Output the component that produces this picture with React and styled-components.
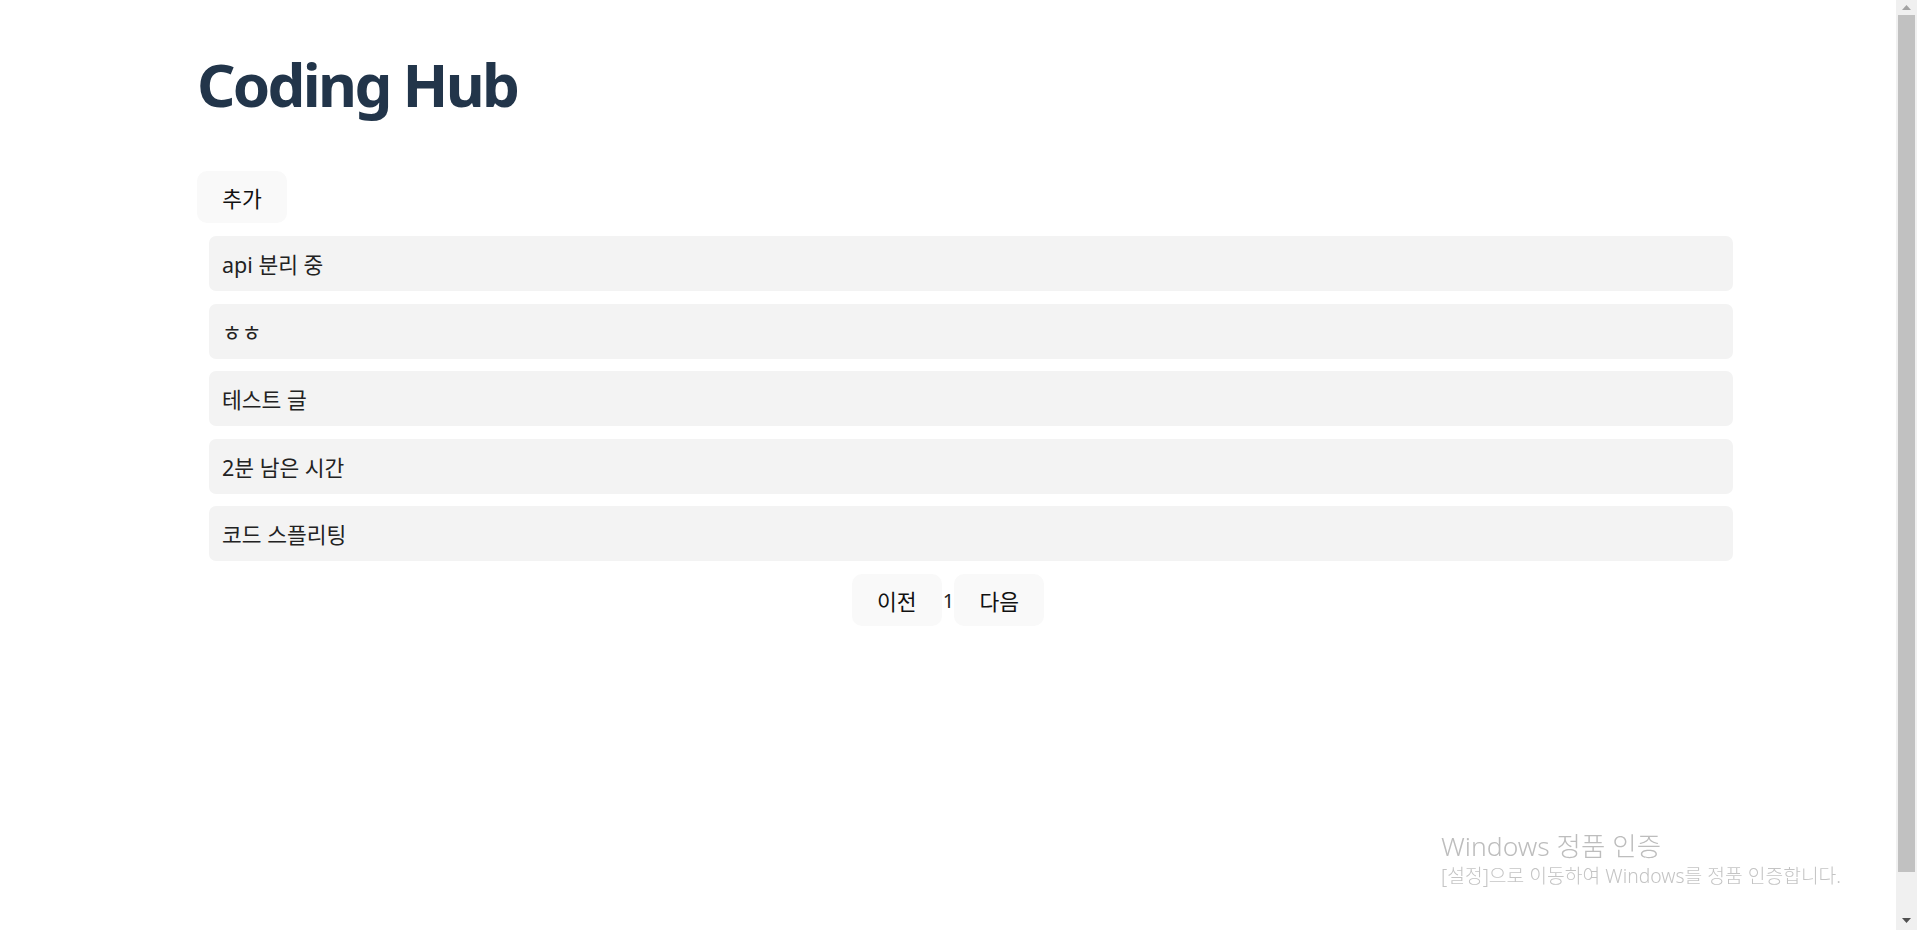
import styled, { createGlobalStyle } from 'styled-components';

const GlobalStyle = createGlobalStyle`
  html, body {
    margin: 0;
    padding: 0;
    background: #fff;
    overflow: hidden;
  }

  body {
    font-family: "Noto Sans", "Noto Sans CJK KR", sans-serif;
    color: #222;
  }
`;

const Shell = styled.div`
  display: flex;
  height: 930px;
`;

const Page = styled.div`
  flex: 1;
  padding-top: 48px;
  box-sizing: border-box;
`;

const Container = styled.main`
  width: 1548px;
  margin-left: 197px;
  display: flex;
  flex-direction: column;
`;

const Title = styled.h1`
  margin: 0 0 51px;
  font-size: 60px;
  line-height: 72px;
  font-weight: 700;
  letter-spacing: -2.7px;
  color: #22354a;
`;

const Button = styled.button`
  width: 90px;
  height: 52px;
  padding: 0;
  border: none;
  border-radius: 10px;
  background: #f9f9f9;
  font-family: inherit;
  font-size: 21.5px;
  color: #111;
  cursor: pointer;
`;

const Toolbar = styled.div`
  display: flex;
  margin-bottom: 13px;
`;

const PostList = styled.ul`
  list-style: none;
  margin: 0 12px;
  padding: 0;
  display: flex;
  flex-direction: column;
  gap: 12.5px;
`;

const PostItem = styled.li`
  height: 55px;
  display: flex;
  align-items: center;
  padding: 0 13px;
  border-radius: 7px;
  background: #f3f3f3;
  font-size: 21.5px;
  color: #222;
`;

const Pagination = styled.nav`
  margin-top: 13px;
  display: flex;
  justify-content: center;
  align-items: center;
`;

const PageNumber = styled.span`
  font-size: 20px;
  color: #222;
  padding: 0 0 0 1px;
`;

const ScrollBar = styled.div`
  width: 21px;
  height: 930px;
  background: #f0f0f0;
  display: flex;
  flex-direction: column;
  align-items: center;
`;

const ScrollArrow = styled.div`
  height: ${(p) => p.$size}px;
  width: 21px;
  display: flex;
  align-items: ${(p) => (p.$bottom ? 'flex-end' : 'center')};
  justify-content: center;
  padding-bottom: ${(p) => (p.$bottom ? '7px' : '0')};
  box-sizing: border-box;
  flex-shrink: 0;
`;

const ScrollThumb = styled.div`
  width: 17px;
  height: 857px;
  background: #c1c1c1;
`;

const Watermark = styled.div`
  position: fixed;
  left: 1441px;
  top: 828px;
  color: #bdbdbd;
  pointer-events: none;
  font-family: "Noto Sans", "Noto Sans CJK KR", sans-serif;
  font-weight: 300;
`;

const WatermarkTitle = styled.div`
  font-size: 26.5px;
  line-height: 36px;
`;

const WatermarkText = styled.div`
  font-size: 19.3px;
  line-height: 24px;
  color: #c4c4c4;
`;

const posts = ['api 분리 중', 'ㅎㅎ', '테스트 글', '2분 남은 시간', '코드 스플리팅'];

const App = () => {
  return (
    <>
      <GlobalStyle />
      <Shell>
        <Page>
          <Container>
            <Title>Coding Hub</Title>
            <Toolbar>
              <Button>추가</Button>
            </Toolbar>
            <PostList>
              {posts.map((title) => (
                <PostItem key={title}>{title}</PostItem>
              ))}
            </PostList>
          </Container>
          <Pagination>
            <Button>이전</Button>
            <PageNumber>1</PageNumber>
            <Button>다음</Button>
          </Pagination>
        </Page>
        <ScrollBar>
          <ScrollArrow $size={15}>
            <svg width="9" height="5" viewBox="0 0 9 5">
              <path d="M0 5 L4.5 0 L9 5 Z" fill="#a3a3a3" />
            </svg>
          </ScrollArrow>
          <ScrollThumb />
          <ScrollArrow $size={58} $bottom>
            <svg width="9" height="5" viewBox="0 0 9 5">
              <path d="M0 0 L4.5 5 L9 0 Z" fill="#505050" />
            </svg>
          </ScrollArrow>
        </ScrollBar>
      </Shell>
      <Watermark>
        <WatermarkTitle>Windows 정품 인증</WatermarkTitle>
        <WatermarkText>[설정]으로 이동하여 Windows를 정품 인증합니다.</WatermarkText>
      </Watermark>
    </>
  );
};

export default App;
